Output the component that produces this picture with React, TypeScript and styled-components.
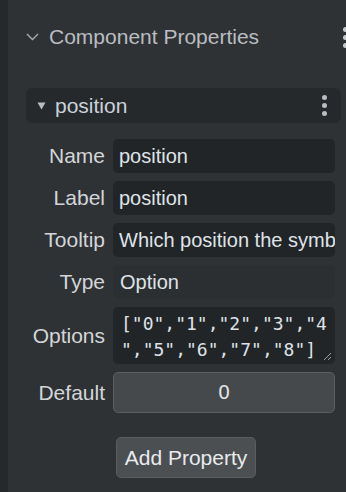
import React from "react";
import styled, { createGlobalStyle } from "styled-components";

const Global = createGlobalStyle`
  html, body { margin: 0; padding: 0; background: #2f3235; overflow: hidden; }
  body { font-family: "Liberation Sans", Arial, sans-serif; }
`;

const Frame = styled.div`
  width: 346px;
  height: 492px;
  display: flex;
  background: #2f3235;
  overflow: hidden;
`;

const Rail = styled.div`
  width: 8px;
  flex: none;
  background: #26292c;
`;

const Panel = styled.div`
  flex: 1;
  min-width: 0;
  display: flex;
  flex-direction: column;
  padding: 18px 0 0 18px;
`;

const SectionHeader = styled.div`
  display: flex;
  align-items: center;
  height: 38px;
  color: #b9bdc1;
  font-size: 21px;
  gap: 10px;
  margin-right: -2px;
`;

const Title = styled.span`
  flex: 1;
`;

const Kebab = styled.div<{ $tone?: string }>`
  display: flex;
  flex-direction: column;
  gap: 3px;
  width: 5px;
  span {
    width: 5px;
    height: 5px;
    border-radius: 50%;
    background: ${(p) => p.$tone || "#c9cccf"};
  }
`;

const PropBox = styled.div`
  margin-top: 32px;
  margin-right: 5px;
  height: 35px;
  background: #26292c;
  border-radius: 6px;
  display: flex;
  align-items: center;
  padding: 0 14px 0 11px;
  color: #c9d2da;
  font-size: 21px;
`;

const PropName = styled.span`
  flex: 1;
  margin-left: 9px;
`;

const Form = styled.div`
  display: grid;
  grid-template-columns: 79px 222px;
  column-gap: 8px;
  row-gap: 8px;
  margin-top: 16px;
  align-items: center;
`;

const Label = styled.div`
  text-align: right;
  color: #d3d6d9;
  font-size: 21px;
`;

const Field = styled.div`
  height: 34px;
  background: #222528;
  border-radius: 5px;
  display: flex;
  align-items: center;
  padding: 0 6px;
  color: #dfe3e7;
  font-size: 20px;
  white-space: nowrap;
  overflow: hidden;
`;

const Plain = styled(Field)`
  background: #2c2f32;
  padding-left: 7px;
`;

const Area = styled.div`
  position: relative;
  height: 57px;
  background: #222528;
  border-radius: 5px;
  padding: 4px 6px 4px 8px;
  box-sizing: border-box;
  font-family: "DejaVu Sans Mono", monospace;
  font-size: 18px;
  line-height: 26px;
  color: #dfe3e7;
  word-break: break-all;
  overflow-wrap: anywhere;
  overflow: hidden;
`;

const Grip = styled.svg`
  position: absolute;
  right: 3px;
  bottom: 3px;
`;

const NumberBox = styled.div`
  height: 41px;
  box-sizing: border-box;
  background: #46494c;
  border: 1px solid #5b5e61;
  border-radius: 5px;
  display: flex;
  align-items: center;
  justify-content: center;
  color: #e6e9ec;
  font-size: 20px;
`;

const ButtonRow = styled.div`
  display: flex;
  justify-content: center;
  margin-top: 24px;
`;

const Button = styled.button`
  height: 41px;
  padding: 0 8px;
  background: #4b4f52;
  border: 1px solid #5a5d60;
  border-radius: 5px;
  color: #e8ebee;
  font-family: "Liberation Sans", Arial, sans-serif;
  font-size: 21px;
`;

const Dots = ({ tone }: { tone?: string }) => (
  <Kebab $tone={tone}>
    <span />
    <span />
    <span />
  </Kebab>
);

export default function App() {
  return (
    <Frame>
      <Global />
      <Rail />
      <Panel>
        <SectionHeader>
          <svg width="13" height="8" viewBox="0 0 13 8">
            <path d="M1 1 L6.5 6.5 L12 1" fill="none" stroke="#a9adb1" strokeWidth="1.4" />
          </svg>
          <Title>Component Properties</Title>
          <Dots />
        </SectionHeader>
        <PropBox>
          <svg width="9" height="9" viewBox="0 0 9 9">
            <path d="M0.5 1.5 L8.5 1.5 L4.5 8.5 Z" fill="#b9bdc1" />
          </svg>
          <PropName>position</PropName>
          <Dots tone="#b9bdc1" />
        </PropBox>
        <Form>
          <Label>Name</Label>
          <Field>position</Field>
          <Label>Label</Label>
          <Field>position</Field>
          <Label>Tooltip</Label>
          <Field>Which position the symbol is placed in</Field>
          <Label>Type</Label>
          <Plain>Option</Plain>
          <Label>Options</Label>
          <Area>
            ["0","1","2","3","4","5","6","7","8"]
            <Grip width="9" height="9" viewBox="0 0 9 9">
              <path d="M1 8 L8 1 M5 8 L8 5" stroke="#9a9da0" strokeWidth="1" />
            </Grip>
          </Area>
          <Label>Default</Label>
          <NumberBox>0</NumberBox>
        </Form>
        <ButtonRow>
          <Button>Add Property</Button>
        </ButtonRow>
      </Panel>
    </Frame>
  );
}
